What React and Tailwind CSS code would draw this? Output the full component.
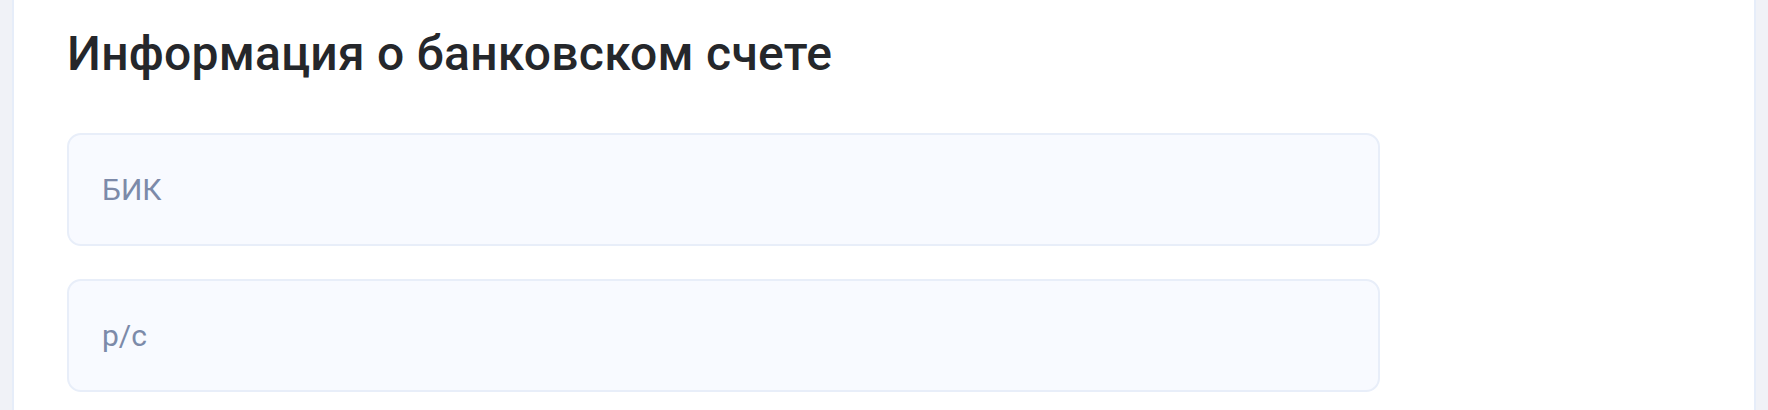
import React from "react";

const fields = [
  { name: "bik", placeholder: "БИК" },
  { name: "account", placeholder: "р/с" },
];

const BankInfo = () => {
  return (
    <div className="min-h-[410px] bg-[#f0f2f7] px-[12px] font-['Roboto',sans-serif]">
      <div className="min-h-[410px] bg-white border-x-2 border-[#e6edf9] pl-[53px] pt-[26px] pb-[18px]">
        <h2 className="text-[48px] leading-[56px] font-medium text-[#25272b] tracking-[0.26px]">
          Информация о банковском счете
        </h2>

        <div className="mt-[51px] flex flex-col gap-[33px] w-[1313px]">
          {fields.map((field) => (
            <input
              key={field.name}
              name={field.name}
              type="text"
              placeholder={field.placeholder}
              className="h-[113px] w-full rounded-[14px] border-2 border-[#e8eef9] bg-[#f8faff] px-[33px] text-[30px] text-[#25272b] placeholder:text-[#7c8aa9] outline-none"
            />
          ))}
        </div>
      </div>
    </div>
  );
};

export default function App() {
  return <BankInfo />;
}
